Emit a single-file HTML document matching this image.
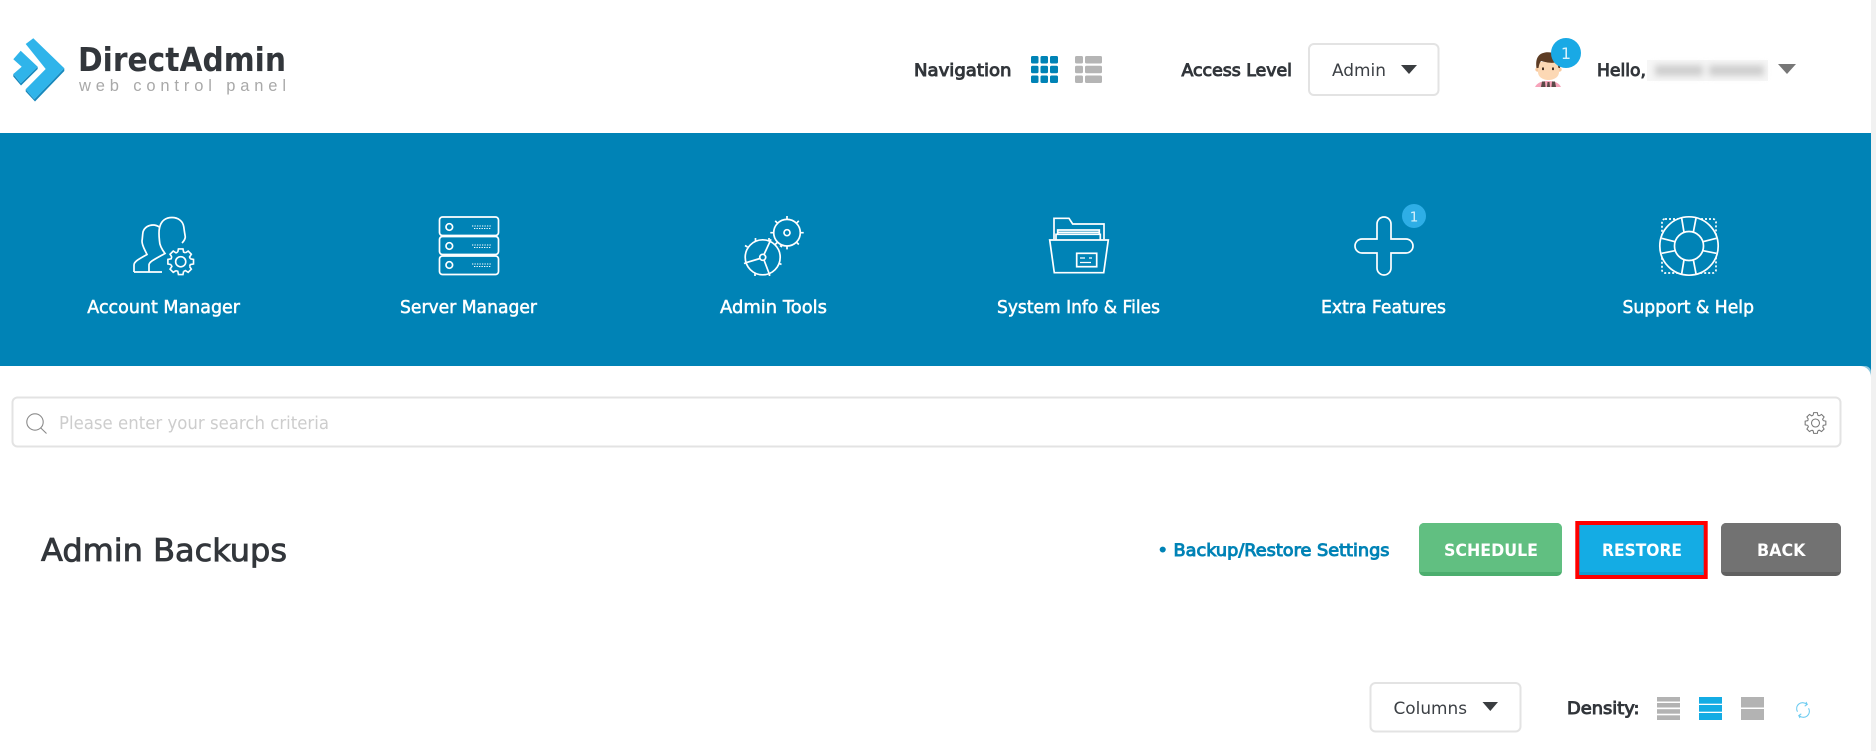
<!DOCTYPE html>
<html><head><meta charset="utf-8"><title>Admin Backups</title>
<style>html,body{margin:0;padding:0;background:#fff;width:1876px;height:751px;overflow:hidden}svg{display:block}
text{font-family:"DejaVu Sans","Liberation Sans",sans-serif}
.lb{fill:#fff;font-size:17.5px;stroke:#fff;stroke-width:.5px}
.sb{fill:#32363b;font-size:17px;stroke:#32363b;stroke-width:.95px}
.bt{fill:#fff;font-size:16.5px;font-weight:bold}
.ic{fill:none;stroke:#fff;stroke-width:1.7}
</style></head><body>
<svg width="1876" height="751" viewBox="0 0 1876 751" xmlns="http://www.w3.org/2000/svg">
<defs>
<g id="t"><path d="M-2.25-7.36L-1.74-9.85L1.74-9.85L2.25-7.36A7.7 7.7 0 0 1 3.61-6.8"/></g>
<g id="gear"><use href="#t"/><use href="#t" transform="rotate(45)"/><use href="#t" transform="rotate(90)"/><use href="#t" transform="rotate(135)"/><use href="#t" transform="rotate(180)"/><use href="#t" transform="rotate(225)"/><use href="#t" transform="rotate(270)"/><use href="#t" transform="rotate(315)"/></g>
<filter id="bl" x="-20%" y="-100%" width="140%" height="300%"><feGaussianBlur stdDeviation="3.2"/></filter>
</defs>
<rect width="1876" height="751" fill="#fff"/>
<rect x="1871" width="5" height="751" fill="#f1f1f1"/>

<!-- logo -->
<path d="M25.7 89.300L34.300 99.300L64.300 68.300L64.300 71L35 101.500L25.700 91.500Z" fill="#1788bc"/>
<path d="M20.700 83.300L37.700 66.700L37.700 69L21 85.500L13.300 76.500V74Z" fill="#1788bc"/>
<path d="M25.700 44L33.300 38.300L64.300 68.300L34.300 99.300L25.700 89.300L45.700 69Z" fill="#2fb4ea"/>
<path d="M20.700 50.700L13.300 59.300L21.700 66.700L13.300 74L20.700 83.300L37.700 66.700Z" fill="#2fb4ea"/>
<text x="78" y="71" font-size="33" font-weight="bold" fill="#32363b" textLength="208" lengthAdjust="spacingAndGlyphs">DirectAdmin</text>
<text x="79" y="91" font-size="16.500" fill="#a9a9a9" textLength="207" lengthAdjust="spacing" style="font-family:'Liberation Sans',sans-serif">web control panel</text>

<!-- nav -->
<text class="sb" x="914" y="76" textLength="97.500" lengthAdjust="spacingAndGlyphs">Navigation</text>
<g fill="#0083b6">
<rect x="1031" y="56" width="7.500" height="7.500" rx="1.500"/><rect x="1040.500" y="56" width="7.500" height="7.500" rx="1.500"/><rect x="1050" y="56" width="8" height="7.500" rx="1.500"/>
<rect x="1031" y="65.700" width="7.500" height="7.500" rx="1.500"/><rect x="1040.500" y="65.700" width="7.500" height="7.500" rx="1.500"/><rect x="1050" y="65.700" width="8" height="7.500" rx="1.500"/>
<rect x="1031" y="75.500" width="7.500" height="7.500" rx="1.500"/><rect x="1040.500" y="75.500" width="7.500" height="7.500" rx="1.500"/><rect x="1050" y="75.500" width="8" height="7.500" rx="1.500"/>
</g>
<g fill="#b5b5b5">
<rect x="1075" y="56" width="8" height="7.500" rx="1.500"/><rect x="1085" y="56" width="17" height="7.500" rx="1.500"/>
<rect x="1075" y="65.700" width="8" height="7.500" rx="1.500"/><rect x="1085" y="65.700" width="17" height="7.500" rx="1.500"/>
<rect x="1075" y="75.500" width="8" height="7.500" rx="1.500"/><rect x="1085" y="75.500" width="17" height="7.500" rx="1.500"/>
</g>
<text class="sb" x="1181.500" y="76" textLength="110.500" lengthAdjust="spacingAndGlyphs">Access Level</text>
<rect x="1309" y="44" width="129.500" height="51" rx="5" fill="#fff" stroke="#e3e3e3" stroke-width="2"/>
<text x="1332" y="76" font-size="17" fill="#3c4045" textLength="54" lengthAdjust="spacingAndGlyphs">Admin</text>
<path d="M1401 65H1417L1409 74Z" fill="#3a3d40"/>

<!-- user -->
<path d="M1535 87C1537 83 1541 81 1548 81C1555 81 1559 83 1561 87Z" fill="#f6a3ba"/>
<path d="M1541 87L1542 81.500H1545L1545.500 87ZM1551.500 87L1552 81.500H1555L1556 87ZM1547 87L1547.500 82H1549.500L1550 87Z" fill="#5b4a48"/>
<circle cx="1537.500" cy="69.500" r="2.200" fill="#f8c99e"/><circle cx="1559.500" cy="69.500" r="2.200" fill="#f8c99e"/>
<path d="M1538 62H1559V72C1559 77 1554 80 1548.500 80C1543 80 1538 77 1538 72Z" fill="#fcd8b4"/>
<path d="M1536.500 68C1535.500 60 1537 54 1545 52.500C1552 51.500 1558 54 1560 60L1560 68L1558.500 68L1557 62C1552 64 1545 62 1541 61C1539.500 63 1539 65 1538.500 68Z" fill="#5d3c24"/>
<rect x="1542" y="67.500" width="2" height="2.600" fill="#4a3526"/><rect x="1552" y="67.500" width="2" height="2.600" fill="#4a3526"/>
<circle cx="1566" cy="53" r="15" fill="#19a9e5"/>
<text x="1566" y="59" font-size="16" fill="#d8f1fb" text-anchor="middle">1</text>
<text class="sb" x="1597" y="76" textLength="49" lengthAdjust="spacingAndGlyphs">Hello,</text>
<rect x="1647" y="60" width="121" height="21" fill="#f6f6f6"/>
<g filter="url(#bl)" fill="#cfcfcf"><rect x="1655" y="65" width="48" height="11"/><rect x="1709" y="65" width="55" height="11"/></g>
<path d="M1778 64H1796L1787 74Z" fill="#777"/>

<!-- blue band -->
<rect x="0" y="133" width="1871" height="233" fill="#0083b6"/>
<path d="M1860 366H1871V377A11 11 0 0 0 1860 366Z" fill="#0083b6" opacity=".45"/>
<path d="M1865 366H1871V372A6 6 0 0 0 1865 366Z" fill="#0083b6"/>

<!-- account -->
<g class="ic">
<path d="M134 272H162M134 272V265C134 262 137 260 147 254.500C145 250 142 246 142 241C142.500 238 142.500 235 143 232C144.500 227 149 225 153 225C155.500 225 158 226 160 227.500"/>
<path d="M149 272V265C149 262 153 260 165 253.500C162 249.500 159.500 245 159.500 241C159 236 158.500 232 159.500 228C161 220.500 166 217.500 172 217.500C178 217.500 183 221 183.800 227C184.300 231 185 235 185.300 237C185 240 183.500 241.500 182 243"/>
</g>
<g transform="translate(180.700 261.700) scale(1.300)" fill="none" stroke="#fff" stroke-width="1.250"><use href="#gear"/><circle r="3.900"/></g>

<!-- server -->
<g class="ic">
<rect x="439.500" y="217" width="59" height="18.500" rx="3"/><rect x="439.500" y="236.500" width="59" height="18" rx="3"/><rect x="439.500" y="256" width="59" height="18.500" rx="3"/>
<circle cx="449.300" cy="227" r="3.300"/><circle cx="449.300" cy="246" r="3.300"/><circle cx="449.300" cy="265" r="3.300"/>
</g>
<g fill="none" stroke="#fff" stroke-width="1" stroke-dasharray="1.300 1.200">
<path d="M472 226H491M474 228.500H491M472 245H491M474 247.500H491M472 264H491M474 266.500H491"/>
</g>

<!-- admin tools -->
<g class="ic">
<circle cx="787" cy="232.700" r="13.300"/><circle cx="787" cy="232.700" r="3"/>
<path d="M787 216V219.400M787 246V249.400M770.300 232.700H773.700M800.300 232.700H803.700M775.200 220.900L777.600 223.300M796.400 242.100L798.800 244.500M798.800 220.900L796.400 223.300M777.600 242.100L775.200 244.500"/>
<circle cx="762.700" cy="257.300" r="17.500"/><circle cx="762.700" cy="257.300" r="3"/>
<path d="M764 254.500L771 239.300M760 258.500L746 262.700M764 260L769.300 274"/>
<path d="M755.500 238V241M769 238V241M745 245.500L747.500 247M780 245.500L782 247M744 263.500L747 262.500M781.500 264.500L778.500 263M755 276V273.500M769.500 276V273.500"/>
</g>

<!-- folder -->
<g class="ic">
<path d="M1054 239.300V218.300H1069L1072.700 224H1104V239.300"/>
<path d="M1049.700 240H1108.300L1103.700 272.700H1054.300Z"/>
<path d="M1056 239.500V234.300H1100.300V239.500M1057.700 234V230H1099.300V234M1058 232.300H1099"/>
<rect x="1076.700" y="253.300" width="20" height="13.400"/>
<path d="M1080 258H1085M1089 258H1092M1080 262.500H1091" stroke-width="1.200"/>
</g>

<!-- plus -->
<path class="ic" d="M1377 239V224a7 7 0 0 1 14 0V239H1406a7 7 0 0 1 0 14H1391V268a7 7 0 0 1-14 0V253H1362a7 7 0 0 1 0-14Z"/>
<circle cx="1414" cy="216" r="12" fill="#2eaee6"/>
<text x="1414" y="221.500" font-size="13.500" fill="#d8f1fb" text-anchor="middle">1</text>

<!-- lifebuoy -->
<rect x="1662" y="219" width="54" height="54" rx="3" fill="none" stroke="#fff" stroke-width="1.700" stroke-dasharray="2 2"/>
<circle cx="1689" cy="246" r="29.200" fill="#0083b6" stroke="#fff" stroke-width="1.700"/>
<g class="ic">
<circle cx="1689" cy="246" r="14.500"/>
<path d="M1681.700 218.300L1684 232.300M1696 218.300L1693.300 232.300M1681.700 273.700L1684 259.700M1696 273.700L1693.300 259.700M1661.700 238.300L1675 241.700M1661.700 253.300L1675 250.700M1716.300 238.300L1703 241.700M1716.300 253.300L1703 250.700"/>
</g>

<!-- labels -->
<text class="lb" x="87.300" y="313" textLength="152.700" lengthAdjust="spacingAndGlyphs">Account Manager</text>
<text class="lb" x="400" y="313" textLength="137" lengthAdjust="spacingAndGlyphs">Server Manager</text>
<text class="lb" x="720" y="313" textLength="107" lengthAdjust="spacingAndGlyphs">Admin Tools</text>
<text class="lb" x="997" y="313" textLength="163" lengthAdjust="spacingAndGlyphs">System Info &amp; Files</text>
<text class="lb" x="1321" y="313" textLength="125" lengthAdjust="spacingAndGlyphs">Extra Features</text>
<text class="lb" x="1622.500" y="313" textLength="131.500" lengthAdjust="spacingAndGlyphs">Support &amp; Help</text>

<!-- search -->
<rect x="12.500" y="397.500" width="1828" height="49" rx="5" fill="#fff" stroke="#e3e3e3" stroke-width="2"/>
<circle cx="35" cy="422" r="8.200" fill="none" stroke="#8a8a8a" stroke-width="1.100"/>
<path d="M40.800 428L46.500 433.500" stroke="#8a8a8a" stroke-width="1.100"/>
<text x="59" y="429" font-size="17.500" fill="#cdcdcd" textLength="270" lengthAdjust="spacingAndGlyphs">Please enter your search criteria</text>
<g transform="translate(1815.500 423) scale(1.050)" fill="none" stroke="#777" stroke-width="1"><use href="#gear"/><circle r="3.800"/></g>

<!-- title row -->
<text x="41" y="561" font-size="31.500" fill="#32363b" stroke="#32363b" stroke-width=".85" textLength="246" lengthAdjust="spacingAndGlyphs">Admin Backups</text>
<text x="1157.500" y="556" font-size="17" fill="#0083b6" stroke="#0083b6" stroke-width=".95" textLength="232" lengthAdjust="spacingAndGlyphs">• Backup/Restore Settings</text>

<rect x="1419" y="523" width="143" height="53" rx="5" fill="#4cae6e"/>
<path d="M1419 528a5 5 0 0 1 5-5H1557a5 5 0 0 1 5 5V572H1419Z" fill="#61bf81"/>
<text class="bt" x="1444" y="556" textLength="94" lengthAdjust="spacingAndGlyphs">SCHEDULE</text>

<rect x="1577.300" y="523" width="128.400" height="54" fill="#14ace4" stroke="#f00" stroke-width="4"/>
<rect x="1579.300" y="572" width="124.400" height="3" fill="#129dd2"/>
<text class="bt" x="1602" y="556" textLength="80" lengthAdjust="spacingAndGlyphs">RESTORE</text>

<rect x="1721" y="523" width="120" height="53" rx="5" fill="#616161"/>
<path d="M1721 528a5 5 0 0 1 5-5H1836a5 5 0 0 1 5 5V572H1721Z" fill="#727272"/>
<text class="bt" x="1757" y="556" textLength="48.500" lengthAdjust="spacingAndGlyphs">BACK</text>

<!-- table toolbar -->
<rect x="1370.500" y="683" width="150" height="48.500" rx="5" fill="#fff" stroke="#e3e3e3" stroke-width="2"/>
<text x="1393.500" y="714" font-size="17" fill="#3c4045" textLength="73.500" lengthAdjust="spacingAndGlyphs">Columns</text>
<path d="M1482.500 702H1498L1490.300 711Z" fill="#3a3d40"/>
<text class="sb" x="1567" y="714" textLength="72.500" lengthAdjust="spacingAndGlyphs">Density:</text>
<g fill="#b3b3b3">
<rect x="1657" y="697" width="23" height="4.500"/><rect x="1657" y="703" width="23" height="4.500"/><rect x="1657" y="709.200" width="23" height="4.500"/><rect x="1657" y="715.300" width="23" height="4.700"/>
<rect x="1741" y="697" width="23" height="10.500"/><rect x="1741" y="709" width="23" height="11"/>
</g>
<g fill="#14ace4"><rect x="1699" y="697" width="23" height="6.700"/><rect x="1699" y="705" width="23" height="6.700"/><rect x="1699" y="713" width="23" height="7"/></g>
<g transform="translate(1803 710) scale(.85) translate(-1792 -710)" fill="none" stroke="#6ccbf0" stroke-width="1.200">
<path d="M1785.500 712A7 7 0 0 1 1796.500 703.500"/><path d="M1798.500 708A7 7 0 0 1 1787.500 716.500"/>
<path d="M1794 705.500L1797 703.500L1795.500 700.500M1790 714.500L1787 716.500L1788.500 719.500"/>
</g>
</svg>
</body></html>
